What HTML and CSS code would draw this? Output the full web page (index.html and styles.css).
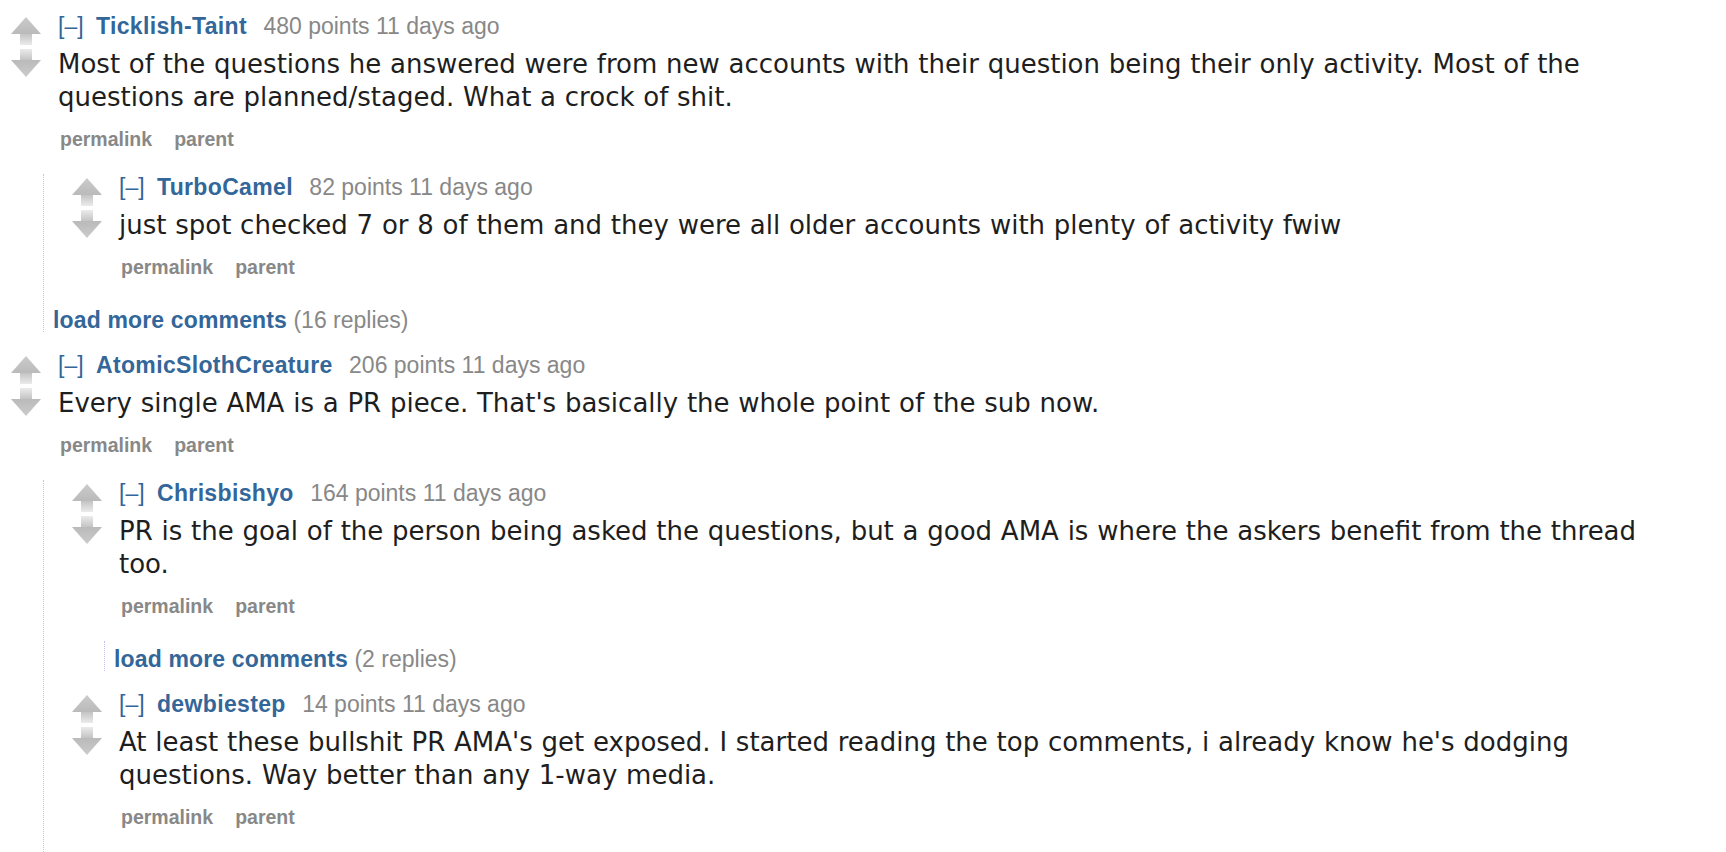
FILE: index.html
```html
<!DOCTYPE html>
<html>
<head>
<meta charset="utf-8">
<link rel="stylesheet" href="styles.css">
</head>
<body>
<svg width="0" height="0" class="defs">
  <defs>
    <linearGradient id="stemUp" x1="0" y1="0" x2="0" y2="1">
      <stop offset="0" stop-color="#c0c0c0"/>
      <stop offset="1" stop-color="#ebebeb"/>
    </linearGradient>
    <linearGradient id="stemDown" x1="0" y1="1" x2="0" y2="0">
      <stop offset="0" stop-color="#c0c0c0"/>
      <stop offset="1" stop-color="#ebebeb"/>
    </linearGradient>
    <linearGradient id="headUp" x1="0" y1="0" x2="0" y2="1">
      <stop offset="0" stop-color="#cbcbcb"/>
      <stop offset="1" stop-color="#bababa"/>
    </linearGradient>
    <linearGradient id="headDown" x1="0" y1="1" x2="0" y2="0">
      <stop offset="0" stop-color="#cbcbcb"/>
      <stop offset="1" stop-color="#bababa"/>
    </linearGradient>
    <symbol id="up" viewBox="0 0 30 28">
      <rect x="9" y="16" width="12" height="12" fill="url(#stemUp)"/>
      <polygon points="15,0 30,17 0,17" fill="url(#headUp)"/>
    </symbol>
    <symbol id="down" viewBox="0 0 30 28">
      <rect x="9" y="0" width="12" height="12" fill="url(#stemDown)"/>
      <polygon points="0,11 30,11 15,28" fill="url(#headDown)"/>
    </symbol>
  </defs>
</svg>

<div class="page">

  <div class="comment">
    <div class="main">
      <div class="midcol">
        <svg class="arrow up" width="30" height="28"><use href="#up"/></svg>
        <svg class="arrow down" width="30" height="28"><use href="#down"/></svg>
      </div>
      <div class="entry">
        <p class="tagline"><a class="expand">[–]</a> <a class="author">Ticklish-Taint</a> <span class="score">480 points</span> <span class="time">11 days ago</span></p>
        <div class="md"><p>Most of the questions he answered were from new accounts with their question being their only activity. Most of the questions are planned/staged. What a crock of shit.</p></div>
        <ul class="buttons"><li>permalink</li><li>parent</li></ul>
      </div>
    </div>
    <div class="child">
      <div class="comment">
        <div class="main">
          <div class="midcol">
            <svg class="arrow up" width="30" height="28"><use href="#up"/></svg>
            <svg class="arrow down" width="30" height="28"><use href="#down"/></svg>
          </div>
          <div class="entry">
            <p class="tagline"><a class="expand">[–]</a> <a class="author">TurboCamel</a> <span class="score">82 points</span> <span class="time">11 days ago</span></p>
            <div class="md"><p>just spot checked 7 or 8 of them and they were all older accounts with plenty of activity fwiw</p></div>
            <ul class="buttons"><li>permalink</li><li>parent</li></ul>
          </div>
        </div>
      </div>
      <div class="morechildren"><a class="more">load more comments</a> <span class="count">(16 replies)</span></div>
    </div>
  </div>

  <div class="comment">
    <div class="main">
      <div class="midcol">
        <svg class="arrow up" width="30" height="28"><use href="#up"/></svg>
        <svg class="arrow down" width="30" height="28"><use href="#down"/></svg>
      </div>
      <div class="entry">
        <p class="tagline"><a class="expand">[–]</a> <a class="author">AtomicSlothCreature</a> <span class="score">206 points</span> <span class="time">11 days ago</span></p>
        <div class="md"><p>Every single AMA is a PR piece. That's basically the whole point of the sub now.</p></div>
        <ul class="buttons"><li>permalink</li><li>parent</li></ul>
      </div>
    </div>
    <div class="child last">
      <div class="comment">
        <div class="main">
          <div class="midcol">
            <svg class="arrow up" width="30" height="28"><use href="#up"/></svg>
            <svg class="arrow down" width="30" height="28"><use href="#down"/></svg>
          </div>
          <div class="entry">
            <p class="tagline"><a class="expand">[–]</a> <a class="author">Chrisbishyo</a> <span class="score">164 points</span> <span class="time">11 days ago</span></p>
            <div class="md"><p>PR is the goal of the person being asked the questions, but a good AMA is where the askers benefit from the thread too.</p></div>
            <ul class="buttons"><li>permalink</li><li>parent</li></ul>
          </div>
        </div>
        <div class="child">
          <div class="morechildren"><a class="more">load more comments</a> <span class="count">(2 replies)</span></div>
        </div>
      </div>
      <div class="comment">
        <div class="main">
          <div class="midcol">
            <svg class="arrow up" width="30" height="28"><use href="#up"/></svg>
            <svg class="arrow down" width="30" height="28"><use href="#down"/></svg>
          </div>
          <div class="entry">
            <p class="tagline"><a class="expand">[–]</a> <a class="author">dewbiestep</a> <span class="score">14 points</span> <span class="time">11 days ago</span></p>
            <div class="md"><p>At least these bullshit PR AMA's get exposed. I started reading the top comments, i already know he's dodging questions. Way better than any 1-way media.</p></div>
            <ul class="buttons"><li>permalink</li><li>parent</li></ul>
          </div>
        </div>
      </div>
    </div>
  </div>

</div>
</body>
</html>
```

FILE: styles.css
```css
html, body {
  margin: 0;
  padding: 0;
  background: #ffffff;
}

.defs {
  position: absolute;
  width: 0;
  height: 0;
  overflow: hidden;
}

.page {
  padding: 13px 56px 0 0;
  font-family: "Liberation Sans", Arial, sans-serif;
}

.main {
  display: flex;
  align-items: flex-start;
}

.midcol {
  flex: none;
  width: 30px;
  margin-left: 11px;
  margin-right: 17px;
  padding-top: 4px;
  display: flex;
  flex-direction: column;
  gap: 4px;
}

.arrow {
  display: block;
}

.entry {
  flex: 1;
  min-width: 0;
  padding-bottom: 24px;
}

.tagline {
  margin: 0;
  font-size: 23px;
  line-height: 26px;
  color: #888888;
  white-space: nowrap;
}

.expand {
  color: #336699;
  margin-right: 6px;
}

.author {
  color: #336699;
  font-weight: bold;
  letter-spacing: 0.35px;
  margin-right: 10px;
}

.md {
  margin: 9px 0 14px;
  font-family: "DejaVu Sans", Verdana, sans-serif;
  font-size: 26px;
  line-height: 33px;
  word-spacing: 0.5px;
  color: #1e1e1e;
}

.md p {
  margin: 0;
}

.buttons {
  list-style: none;
  margin: 0;
  padding: 0 0 0 2px;
  display: flex;
  gap: 22px;
  font-size: 19.5px;
  line-height: 22px;
  font-weight: bold;
  color: #888888;
}

.child {
  margin-left: 43px;
  margin-bottom: 20px;
  border-left: 1px dotted #c2c2f0;
  padding-left: 9px;
}

.child.last {
  margin-bottom: 0;
}

.child > .comment {
  margin-left: 8px;
}

.morechildren {
  padding: 6px 0 0;
  font-size: 23px;
  line-height: 24px;
  color: #888888;
}

.more {
  color: #336699;
  font-weight: bold;
  letter-spacing: 0.15px;
}
```
